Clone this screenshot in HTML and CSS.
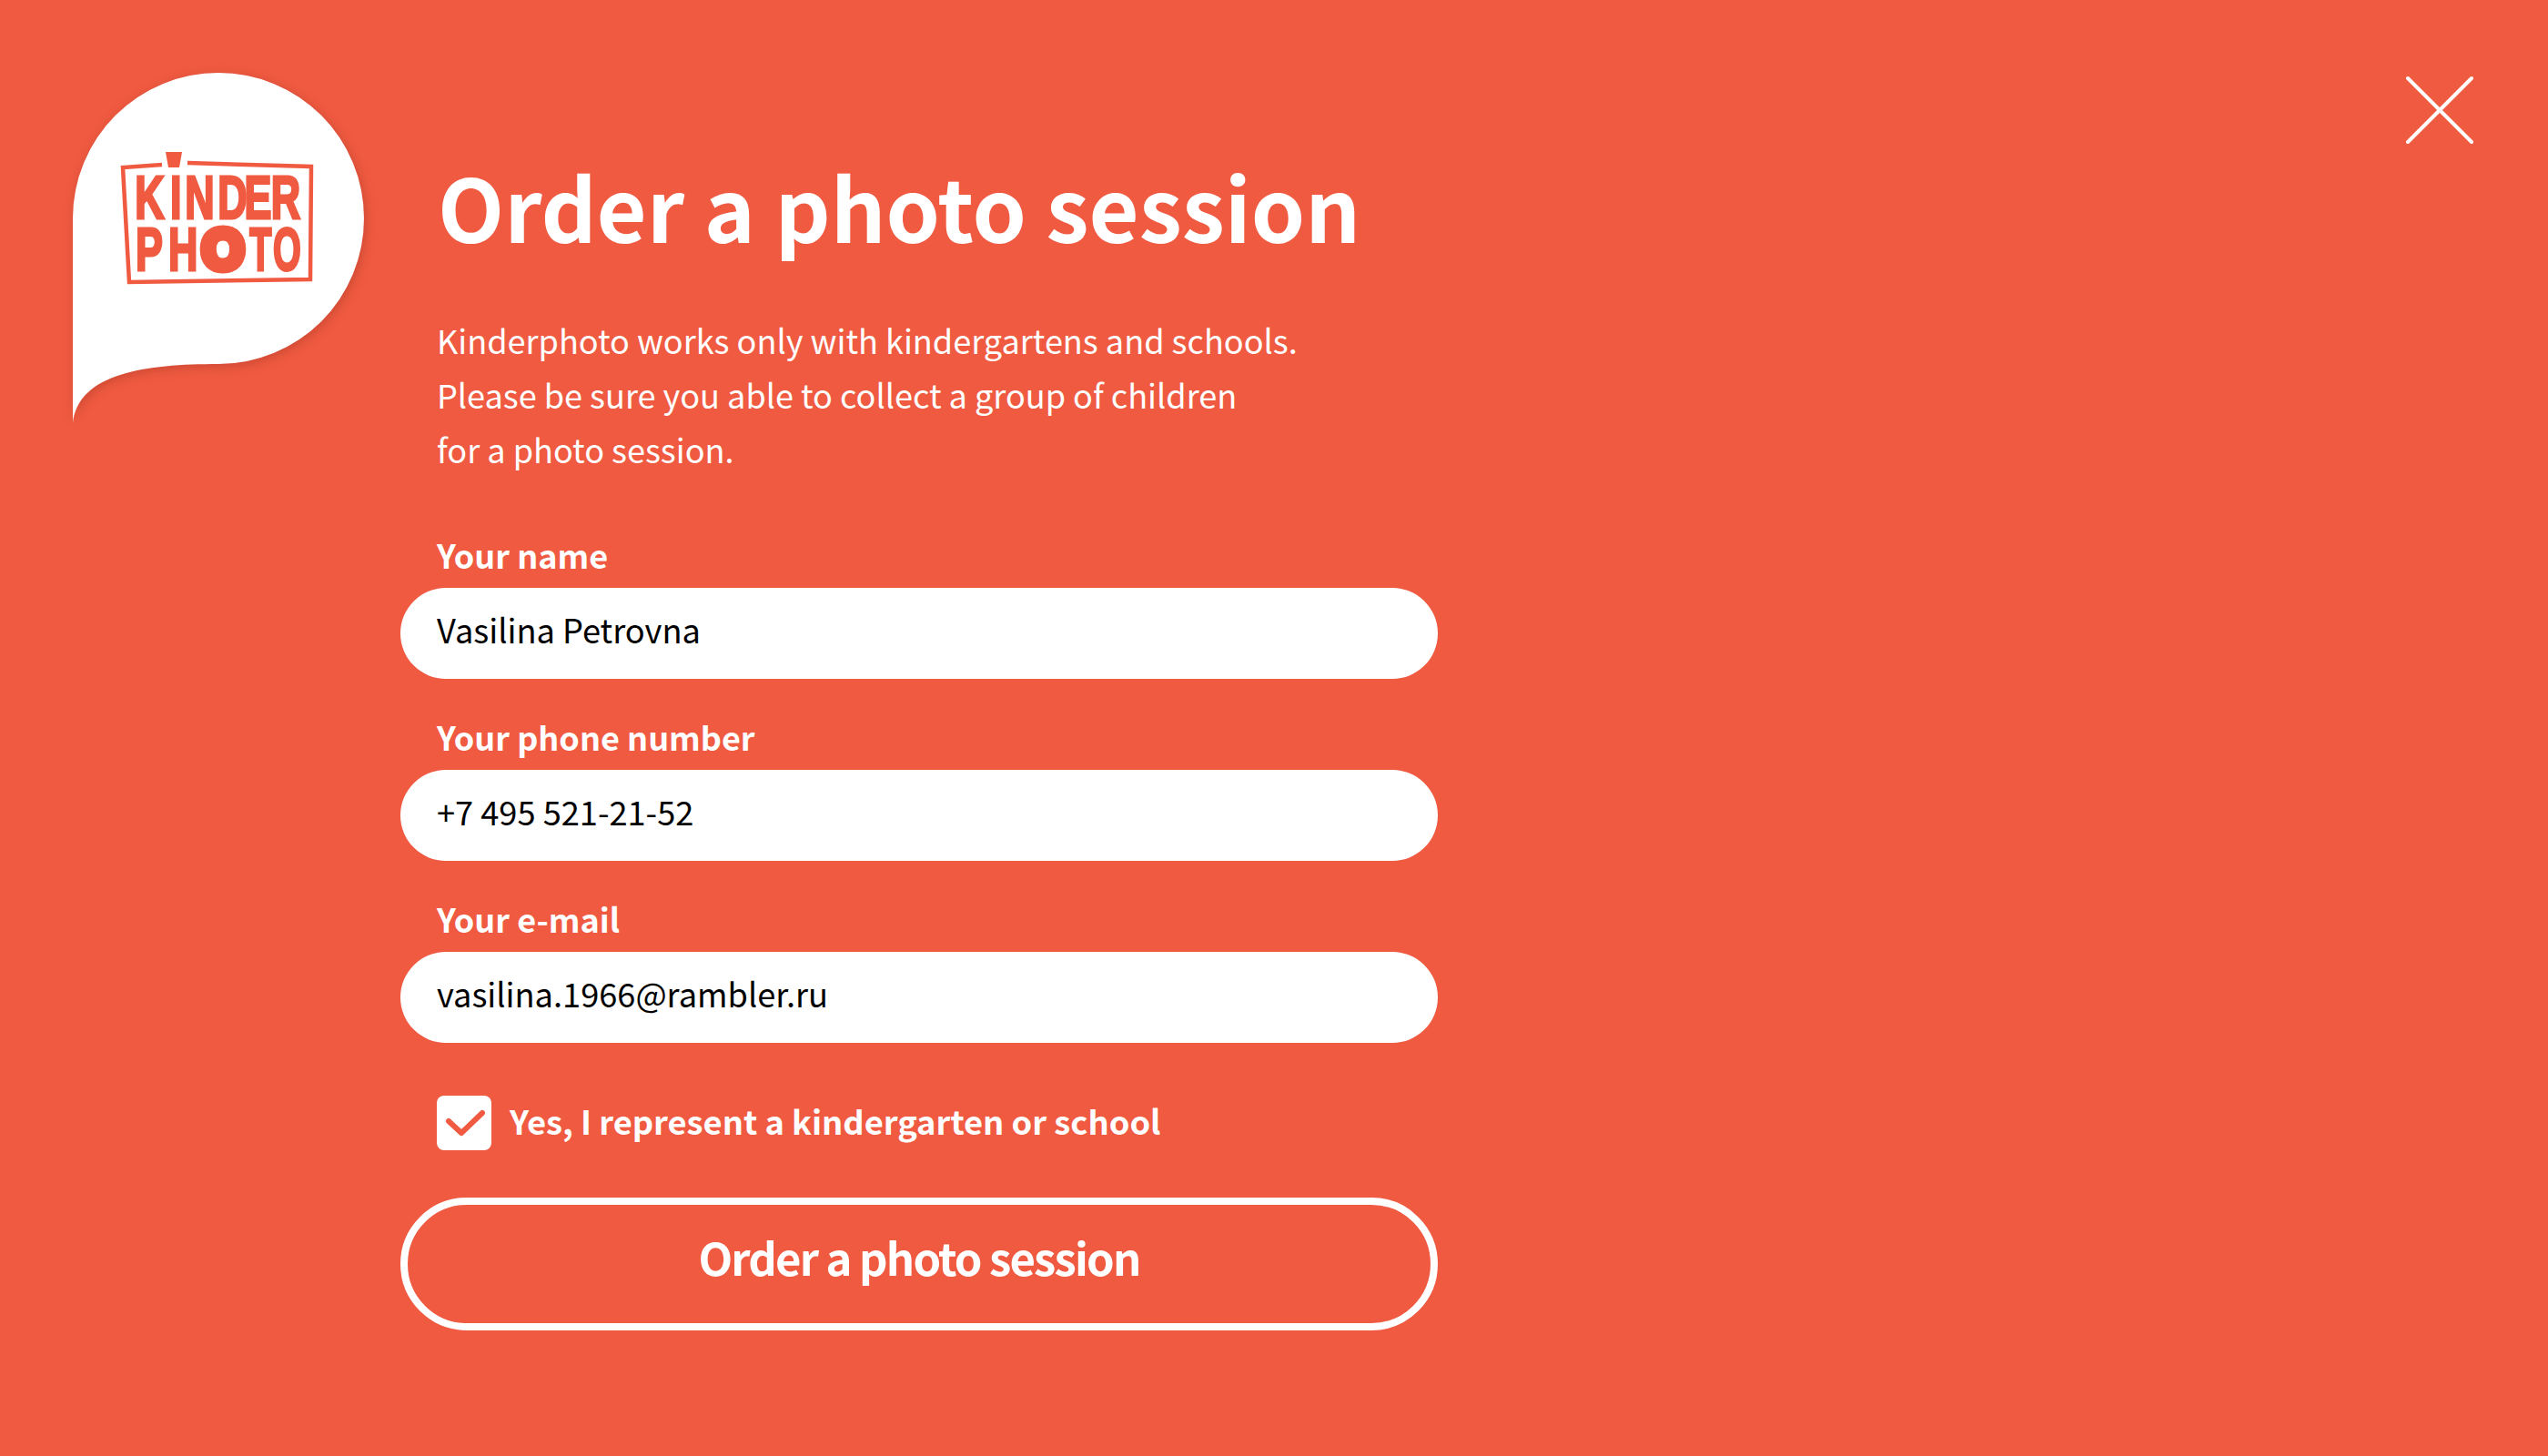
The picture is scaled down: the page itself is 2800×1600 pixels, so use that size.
FILE: index.html
```html
<!DOCTYPE html>
<html lang="en">
<head>
<meta charset="utf-8">
<title>Order a photo session</title>
<link rel="stylesheet" href="styles.css">
</head>
<body>
<main class="page">
  <div class="logo">
    <svg class="logo-svg" width="320" height="384" viewBox="80 80 320 384" role="img" aria-label="Kinderphoto">
      <path class="bubble" d="M80 240A160 160 0 1 1 240 400C160 400 86 410 80 465Z"/>
      <path class="mark-frame" d="M178 181L135 184L142 310L341 307L342 183L206 179"/>
      <path class="mark-fill" d="M182 167H200L197 184H185Z"/>
      <g class="mark-text">
        <text transform="scale(.68 1)" x="218 275 299 352 395 438" y="240">KINDER</text>
        <text transform="scale(.68 1)" x="219 272" y="297">PH</text>
        <text class="mark-big" x="222" y="295" textLength="46" lengthAdjust="spacingAndGlyphs">O</text>
        <text transform="scale(.6 1)" x="457 500" y="297">TO</text>
      </g>
    </svg>
  </div>
  <form class="order">
    <h1 class="title">Order a photo session</h1>
    <p class="intro">Kinderphoto works only with kindergartens and schools.<br>Please be sure you able to collect a group of children<br>for a photo session.</p>
    <div class="field">
      <label class="field-label" for="name">Your name</label>
      <input class="field-input" id="name" value="Vasilina Petrovna">
    </div>
    <div class="field">
      <label class="field-label" for="phone">Your phone number</label>
      <input class="field-input" id="phone" value="+7 495 521-21-52">
    </div>
    <div class="field">
      <label class="field-label" for="email">Your e-mail</label>
      <input class="field-input" id="email" value="vasilina.1966@rambler.ru">
    </div>
    <div class="agree">
      <span class="check">
        <svg width="60" height="60" viewBox="0 0 60 60"><path class="check-mark" d="M13 28L27 41L50 19"/></svg>
      </span>
      <span class="agree-text">Yes, I represent a kindergarten or school</span>
    </div>
    <button class="submit" type="button">Order a photo session</button>
  </form>
  <button class="close" type="button" aria-label="Close">
    <svg width="76" height="76" viewBox="0 0 76 76"><path class="close-x" d="M4 3L74 73M74 3L4 73"/></svg>
  </button>
</main>
</body>
</html>
```
FILE: styles.css
```css
* { box-sizing: border-box; }
html, body { margin: 0; height: 100%; }
body {
  background: #ef5a41;
  color: #fff;
  font-family: "Noto Sans CJK SC", "Noto Sans", sans-serif;
  overflow: hidden;
}
.page {
  display: flex;
  align-items: flex-start;
  height: 1600px;
  padding: 80px 82px 0 80px;
}
.logo { width: 320px; flex: none; margin-right: 40px; }
.logo-svg { display: block; overflow: visible; }
.bubble { fill: #fff; filter: drop-shadow(2px 3px 6px rgba(120, 30, 10, .28)); }
.mark-frame { fill: none; stroke: #ef5a41; stroke-width: 4.500; }
.mark-fill { fill: #ef5a41; }
.mark-text text {
  fill: #ef5a41;
  stroke: #ef5a41;
  stroke-width: 3px;
  font-family: "Liberation Sans", sans-serif;
  font-weight: 700;
  font-size: 66px;
}
.mark-text .mark-big {
  font-size: 62px;
  stroke-width: 10px;
}
.order { width: 1140px; flex: none; margin-top: 81px; }
.title {
  margin: 0 0 0 41px;
  font-size: 95px;
  line-height: 130px;
  font-weight: 700;
  white-space: nowrap;
}
.intro {
  margin: 52px 0 0 40px;
  font-size: 36.100px;
  line-height: 60px;
  font-weight: 400;
}
.field { margin-top: 40px; }
.intro + .field { margin-top: 63px; }
.field-label {
  display: block;
  padding-left: 40px;
  height: 60px;
  font-size: 36px;
  line-height: 47px;
  font-weight: 700;
}
.field-input {
  display: block;
  width: 100%;
  height: 100px;
  border: 0;
  border-radius: 50px;
  padding: 0 40px 10px;
  background: #fff;
  color: #000;
  font: 400 36.200px/60px "Noto Sans CJK SC", "Noto Sans", sans-serif;
  outline: 0;
}
.agree {
  display: flex;
  align-items: center;
  gap: 20px;
  margin: 58px 0 0 40px;
}
.check {
  width: 60px;
  height: 60px;
  flex: none;
  border-radius: 8px;
  background: #fff;
}
.check svg { display: block; }
.check-mark {
  fill: none;
  stroke: #ef5a41;
  stroke-width: 6px;
  stroke-linecap: round;
  stroke-linejoin: round;
}
.agree-text {
  font-size: 36.300px;
  line-height: 60px;
  font-weight: 700;
  margin-top: -6px;
}
.submit {
  display: block;
  width: 100%;
  height: 146px;
  margin-top: 52px;
  padding: 0 0 16px;
  border: 8px solid #fff;
  border-radius: 73px;
  background: transparent;
  color: #fff;
  letter-spacing: -1.800px;
  font: 700 49px/60px "Noto Sans CJK SC", "Noto Sans", sans-serif;
}
.close {
  flex: none;
  margin: 3px 0 0 auto;
  padding: 0;
  border: 0;
  background: none;
}
.close svg { display: block; }
.close-x {
  fill: none;
  stroke: #fff;
  stroke-width: 4px;
  stroke-linecap: round;
}
```
